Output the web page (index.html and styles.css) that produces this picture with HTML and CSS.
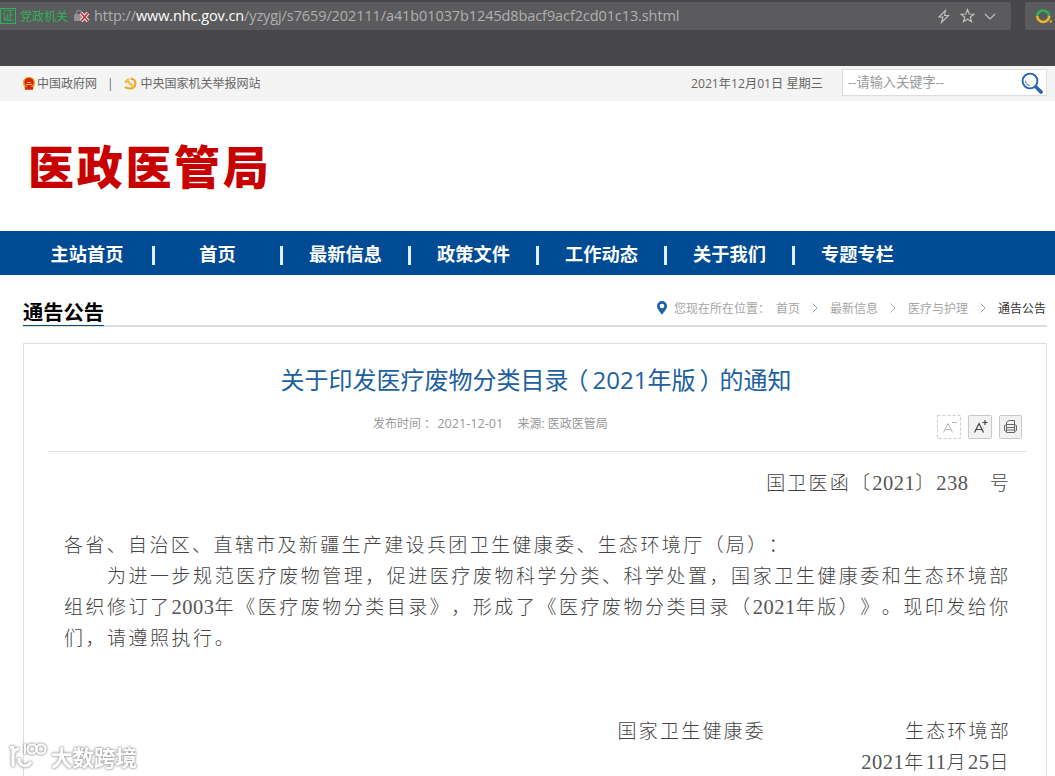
FILE: index.html
```
<!DOCTYPE html>
<html lang="zh-CN">
<head>
  <meta charset="utf-8">
  <title>关于印发医疗废物分类目录（2021年版）的通知</title>
  <link rel="stylesheet" href="styles.css">
</head>
<body>

  <div class="browser">
    <div class="address">
      <span class="cert">证</span>
      <span class="certName">党政机关</span>
      <svg class="lock" width="16" height="14" viewBox="0 0 16 14">
        <path d="M2.500 6V4a2.500 2.500 0 0 1 5 0v2" fill="none" stroke="#858585" stroke-width="1.500"/>
        <rect x="0" y="5" width="10" height="7" rx="1" fill="#929292"/>
        <path d="M7 4l7 8M14 4l-7 8" stroke="#f4e4e4" stroke-width="3.600"/>
        <path d="M7 4l7 8M14 4l-7 8" stroke="#c5303a" stroke-width="1.600"/>
      </svg>
      <span class="url">http://<b>www.nhc.gov.cn</b>/yzygj/s7659/202111/a41b01037b1245d8bacf9acf2cd01c13.shtml</span>
      <svg class="tools" width="60" height="16" viewBox="0 0 60 16" fill="none" stroke="#c2c2c2" stroke-width="1.100">
        <path d="M8.500 2.500L2 9h4l-1.500 5.500L11.500 7.500H7.500z"/>
        <path d="M30.500 1.500l1.700 4.500 4.800.2-3.800 3 1.400 4.600-4.100-2.600-4.100 2.600 1.400-4.600-3.800-3 4.800-.2z"/>
        <path d="M48 6l5 5 5-5"/>
      </svg>
    </div>
    <div class="engine">
      <svg width="18" height="18" viewBox="0 0 18 18" fill="none" stroke-width="2.600">
        <path d="M2.200 9.500a6 6 0 1 1 12 0" stroke="#35ae5c"/>
        <path d="M2.200 9a6 6 0 0 0 12 0" stroke="#e8b32d"/>
        <circle cx="15.800" cy="14.500" r="1.200" fill="#e8b32d" stroke="none"/>
      </svg>
    </div>
  </div>

  <div class="topbar">
    <svg class="emblem" width="12" height="13" viewBox="0 0 12 13">
      <path d="M6 0C9 0 12 2 12 5.500c0 2.500-1 4-1.500 5L10 13H2l-.5-2.500C1 9.500 0 8 0 5.500 0 2 3 0 6 0z" fill="#e8a023"/>
      <circle cx="6" cy="5.500" r="4.600" fill="#d52211"/>
      <path d="M2 10h8v2.500H2z" fill="#d52211"/>
      <path d="M3 7.500h6M4 5.500h4" stroke="#f7b733"/>
    </svg>
    <a>中国政府网</a>
    <span class="pipe">|</span>
    <svg class="party" width="13" height="13" viewBox="0 0 13 13" fill="none">
      <path d="M6.500 1.500c3.500.5 5 2.500 5 5 0 3-2.500 5-5.500 5-2 0-3.500-.3-5-1.300" stroke="#e9a51f" stroke-width="2"/>
      <path d="M1 5.500L5 2M3.500 4l6.500 6.500" stroke="#f3bd3f" stroke-width="2.400"/>
    </svg>
    <a>中央国家机关举报网站</a>
    <span class="date">2021年12月01日 星期三</span>
    <div class="search">
      <span>--请输入关键字--</span>
      <svg width="22" height="22" viewBox="0 0 22 22" fill="none">
        <circle cx="9" cy="9" r="7.400" stroke="#2866ab" stroke-width="1.900"/>
        <path d="M4.500 8.500c0 3 2 5 4.500 5" stroke="#6295c7" stroke-width="1.200"/>
        <path d="M15.500 15.500l4.500 4.500" stroke="#2866ab" stroke-width="3.600" stroke-linecap="round"/>
      </svg>
    </div>
  </div>

  <div class="logo">医政医管局</div>

  <div class="nav">
    <a>主站首页</a>
    <a>首页</a>
    <a>最新信息</a>
    <a>政策文件</a>
    <a>工作动态</a>
    <a>关于我们</a>
    <a>专题专栏</a>
  </div>

  <div class="section">
    <h2>通告公告</h2>
    <div class="crumbs">
      <svg class="pin" width="10" height="14" viewBox="0 0 10 14">
        <path d="M5 0a5 5 0 0 1 5 5c0 3.500-4 6.500-5 9C4 11.500 0 8.500 0 5a5 5 0 0 1 5-5z" fill="#1f63a6"/>
        <circle cx="5" cy="5" r="2.300" fill="#fff"/>
      </svg>
      <span class="where">您现在所在位置：</span>
      <a>首页</a>
      <svg class="arrow" width="6" height="10" viewBox="0 0 6 10"><path d="M.5.5L5 5 .5 9.500"/></svg>
      <a>最新信息</a>
      <svg class="arrow" width="6" height="10" viewBox="0 0 6 10"><path d="M.5.5L5 5 .5 9.500"/></svg>
      <a>医疗与护理</a>
      <svg class="arrow" width="6" height="10" viewBox="0 0 6 10"><path d="M.5.5L5 5 .5 9.500"/></svg>
      <a class="current">通告公告</a>
    </div>
  </div>

  <div class="article">
    <h1>关于印发医疗废物分类目录<span class="paren open">（</span>2021年版<span class="paren close">）</span>的通知</h1>
    <div class="info">
      <span class="source">发布时间<span class="paren colon">：</span> <span class="day">2021-12-01</span> 来源: 医政医管局</span>
      <div class="buttons">
        <svg width="25" height="25" viewBox="0 0 25 25" fill="none">
          <rect x=".5" y=".5" width="23" height="23" stroke="#ccc" stroke-dasharray="3 2"/>
          <path d="M6.500 17.500L11 8.500l4.500 9M8.500 14.500h5.500M15 7.500h5" stroke="#b5b5b5"/>
        </svg>
        <svg width="25" height="25" viewBox="0 0 25 25" fill="none">
          <rect x=".5" y=".5" width="23" height="23" rx="1" fill="#f2f2f2" stroke="#c8c8c8"/>
          <path d="M6.500 17.500L11 8.500l4.500 9M8.500 14.500h5.500M14.500 7.500h5M17 5v5" stroke="#444" stroke-width="1.200"/>
        </svg>
        <svg width="25" height="25" viewBox="0 0 25 25" fill="none">
          <rect x=".5" y=".5" width="22" height="23" rx="1" fill="#f2f2f2" stroke="#c8c8c8"/>
          <path d="M7.500 9.500V7.500L10 5.500h5.500v4M7.500 9.500h8M7.500 9.500v8h8v-8M7.500 12.500h8M7.500 15h8M7.500 9.500l-2 1v5l2 1M15.500 9.500l2 1v5l-2 1" stroke="#666"/>
        </svg>
      </div>
    </div>

    <div class="content">
      <p class="right docNo">国卫医函〔<i>2021</i>〕<i>238</i>　号</p>
      <p>&nbsp;</p>
      <p class="to">各省、自治区、直辖市及新疆生产建设兵团卫生健康委、生态环境厅（局）：</p>
      <p>
        　　为进一步规范医疗废物管理，促进医疗废物科学分类、科学处置，国家卫生健康委和生态环境部<br>
        组织修订了<i>2003</i>年《医疗废物分类目录》，形成了《医疗废物分类目录（<i>2021</i>年版）》。现印发给你<br>
        们，请遵照执行。
      </p>
      <p>&nbsp;</p>
      <p>&nbsp;</p>
      <p class="sign"><span>国家卫生健康委</span><span>生态环境部</span></p>
      <p class="right day2"><i>2021</i>年<i>11</i>月<i>25</i>日</p>
    </div>
  </div>

  <div class="watermark">
    <svg width="40" height="30" viewBox="0 0 40 30" fill="none" stroke="#fff" stroke-width="3">
      <path d="M1 6.500h3v19M4 13c1-3 3-5 6-5M10 17c0 9 8 10 12 4"/>
      <path d="M16 3v10" stroke-width="2"/>
      <circle cx="23" cy="8" r="4.500" stroke-width="2"/>
      <circle cx="32" cy="8" r="4.500" stroke-width="2"/>
    </svg>
    <span>大数跨境</span>
  </div>

</body>
</html>
```
FILE: styles.css
```
* {
  box-sizing: border-box;
}

body {
  margin: 0;
  width: 1055px;
  height: 776px;
  overflow: hidden;
  display: flex;
  flex-direction: column;
  position: relative;
  background-color: #fff;
  color: #666;
  font-family: "Open Sans", "Noto Sans CJK SC", sans-serif;
  font-size: 12px;
  white-space: nowrap;
  text-spacing-trim: space-all;
}

svg {
  flex: none;
}

/* browser bar */
.browser {
  flex: none;
  display: flex;
  gap: 14px;
  height: 66px;
  padding-top: 2px;
  background-color: #47464b;
}

.address {
  display: flex;
  align-items: center;
  width: 1011px;
  height: 28px;
  background-color: #5b5b5d;
  border-radius: 0 2px 2px 0;
}

.cert {
  width: 16px;
  height: 16px;
  border: 1px solid #2bb35c;
  color: #2bb35c;
  line-height: 14px;
  text-align: center;
}

.certName {
  margin-left: 4px;
  color: #2bb35c;
}

.lock {
  margin-left: 6px;
}

.url {
  margin-left: 4px;
  width: 586px;
  padding-bottom: 2px;
  color: #b0b0b0;
  font-size: 14.500px;
  letter-spacing: -0.100px;
}

.url b {
  color: #fff;
  font-weight: normal;
}

.tools {
  margin-left: 257px;
}

.engine {
  width: 30px;
  height: 28px;
  padding: 5px 0 0 10px;
  background-color: #5b5b5d;
  border-radius: 2px 0 0 2px;
}

.topbar {
  flex: none;
  display: flex;
  align-items: center;
  height: 35px;
  padding: 0 8px 1px 23px;
  background-color: #f4f4f4;
}

.topbar a {
  margin-left: 2px;
}

.topbar .party + a {
  margin-left: 4px;
}

.pipe {
  margin: 0 10px 0 10px;
}

.date {
  margin-left: auto;
  font-size: 12.200px;
}

.search {
  display: flex;
  justify-content: space-between;
  align-items: center;
  width: 205px;
  height: 27px;
  margin-left: 19px;
  margin-top: -1px;
  padding: 0 3px 0 5px;
  background-color: #fff;
  border: 1px solid #ddd;
  color: #999;
  font-size: 13.200px;
}

.search span {
  margin-top: -2px;
}

.logo {
  flex: none;
  height: 130px;
  padding: 0 28px;
  color: #c80000;
  font-size: 46px;
  font-weight: 900;
  letter-spacing: 2.700px;
  line-height: 130px;
}

/* menu */
.nav {
  flex: none;
  display: flex;
  height: 44px;
  padding-left: 23px;
  background-color: #004b93;
}

.nav a {
  position: relative;
  width: 128px;
  padding-left: 5px;
  color: #fff;
  font-size: 18.200px;
  font-weight: bold;
  line-height: 46px;
  text-align: center;
}

.nav a:first-child {
  padding-left: 0;
}

.nav a:not(:last-child)::after {
  content: "";
  position: absolute;
  right: -4px;
  top: 15px;
  width: 3px;
  height: 19px;
  background-color: #e3edf6;
}

.section {
  flex: none;
  display: flex;
  justify-content: space-between;
  height: 52px;
  margin: 0 8px 0 23px;
  border-bottom: 2px solid #ddd;
}

.section h2 {
  height: 51px;
  margin: 0;
  padding-top: 24px;
  border-bottom: 1px solid #004b7a;
  color: #000;
  font-size: 20.300px;
  line-height: 27px;
}

.crumbs {
  display: flex;
  align-items: center;
  height: 28px;
  margin-top: 19px;
  margin-right: 1px;
  color: #a5a5a5;
}

.where {
  margin: 0 6px 0 7px;
}

.arrow {
  margin: 0 12px;
  fill: none;
  stroke: #aaa;
}

.crumbs .current {
  color: #333;
}

.article {
  flex: 1;
  min-height: 0;
  margin: 16px 8px 0 23px;
  border: 1px solid #ddd;
  border-bottom: none;
}

.article h1 {
  margin: 0;
  padding: 15px 0 1px 2px;
  color: #20609e;
  font-size: 24px;
  font-weight: normal;
  line-height: 40px;
  text-align: center;
}

/* half width marks, centred by their margins */
.paren {
  font-family: "Noto Sans CJK SC", sans-serif;
  font-feature-settings: "halt";
}

.open {
  margin: 0 4px 0 8px;
}

.close {
  margin: 0 8px 0 4px;
}

.colon {
  margin: 0 3px;
}

.info {
  position: relative;
  height: 51px;
  margin: 0 20px 0 24px;
  border-bottom: 1px solid #ddd;
}

.source {
  display: block;
  padding-left: 325px;
  color: #999;
  line-height: 44px;
}

.day {
  margin-right: 11px;
  margin-left: 1px;
  font-size: 12.700px;
}

.buttons {
  position: absolute;
  right: 2px;
  top: 14px;
  display: flex;
  gap: 6px;
}

.content {
  padding: 14px 34px 0 40px;
  color: #444;
  font-family: "Noto Sans CJK SC", sans-serif;
  font-size: 19px;
  font-weight: 300;
  letter-spacing: 2.520px;
  line-height: 31px;
}

.content p {
  margin: 0;
}

.content i {
  color: #555;
  font-family: "Liberation Serif", serif;
  font-size: 20.500px;
  font-style: normal;
  letter-spacing: 0.500px;
  line-height: 1;
}

.content .right {
  text-align: right;
}

.content .docNo {
  padding-right: 1px;
  letter-spacing: 2.200px;
}

.content .to {
  letter-spacing: 2.350px;
}

.content .day2 {
  padding-right: 1px;
}

.content .sign {
  display: flex;
  justify-content: flex-end;
  gap: 139px;
  padding-right: 1px;
}

.content .sign span {
  letter-spacing: 2.200px;
}

.watermark {
  position: absolute;
  left: 9px;
  top: 739px;
  display: flex;
  align-items: center;
  gap: 2px;
  color: #fff;
  font-size: 21.500px;
  font-weight: bold;
  filter: drop-shadow(0 0 1px #999) drop-shadow(0 0 1px #bbb);
}

.watermark span {
  padding-top: 2px;
}
```
